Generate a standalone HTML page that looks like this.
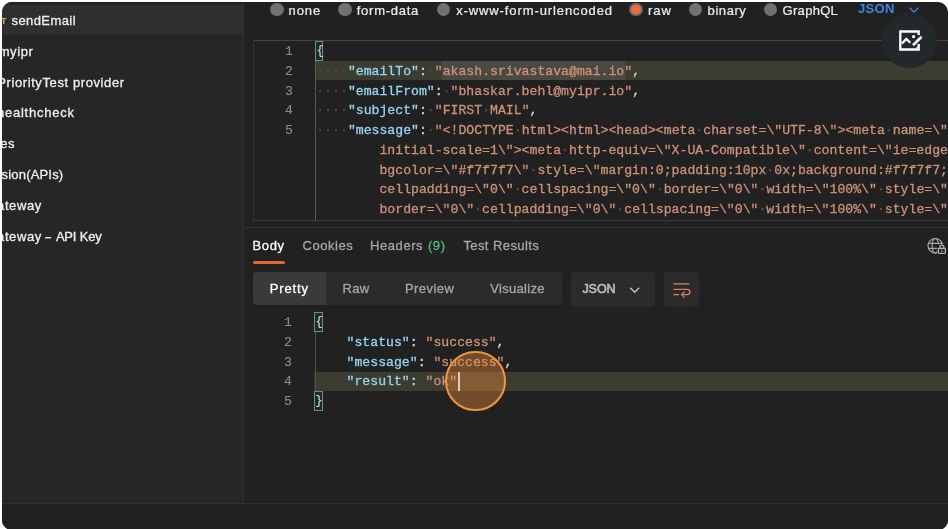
<!DOCTYPE html>
<html lang="en">
<head>
<meta charset="utf-8">
<title>Postman - sendEmail</title>
<style>
html,body{margin:0;padding:0;background:#fff;}
body{width:948px;height:529px;overflow:hidden;position:relative;font-family:"Liberation Sans",sans-serif;}
#app{position:absolute;left:2px;top:2px;width:946px;height:528px;background:#212121;border-radius:10px;overflow:hidden;}
/* all children of #app are positioned in page coordinates via this wrapper */
#pg{position:absolute;left:-2px;top:-2px;width:948px;height:529px;will-change:transform;}
.abs{position:absolute;}
/* sidebar */
#side{left:0;top:0;width:243px;height:503px;background:#262626;}
#sideborder{left:243px;top:0;width:1px;height:503px;background:#303030;}
#selrow{left:0;top:4.6px;width:243px;height:30.8px;background:#2f2f2f;}
.sitem{position:absolute;white-space:pre;color:#f0f0f0;-webkit-text-stroke:0.3px;font-size:13px;line-height:20px;}
#status{left:0;top:503px;width:948px;height:26px;background:#212121;border-top:1px solid #303030;}
/* radios */
.radio{position:absolute;width:13.4px;height:13.4px;border-radius:50%;background:#717171;}
.rlabel{position:absolute;white-space:pre;-webkit-text-stroke:0.24px;color:#ececec;font-size:13px;line-height:20px;}
/* editor */
.mono{font-family:"Liberation Mono",monospace;-webkit-text-stroke:0.3px;font-size:13.17px;line-height:19.7px;white-space:pre;}
.ln{position:absolute;color:#8c8c86;text-align:right;width:30px;-webkit-text-stroke:0.1px;}
.cl{position:absolute;height:19.7px;}
.k{color:#96d4f4;}
.s{color:#ce9178;}
.p{color:#d4d4d4;}
.w{color:#4a4a4a;}
.ws{color:#6a5044;}
/* tabs */
.tab{position:absolute;white-space:pre;-webkit-text-stroke:0.3px;font-size:13px;line-height:20px;color:#a6a6a6;}
.seg{position:absolute;white-space:pre;-webkit-text-stroke:0.3px;font-size:13px;line-height:20px;color:#a6a6a6;}
</style>
</head>
<body>
<div id="app"><div id="pg">

<!-- SIDEBAR -->
<div id="side" class="abs"></div>
<div id="selrow" class="abs"></div>
<div class="abs" style="left:0;top:2px;width:243px;height:1px;background:#1d1d1d;"></div>
<div id="sideborder" class="abs"></div>
<div class="sitem" style="left:-5.6px;top:11.0px;color:#ddb03c;font-size:9.5px;font-weight:bold;-webkit-text-stroke:0;">ST</div>
<div class="sitem" style="left:11.50px;top:11.00px;letter-spacing:0.419px;">sendEmail</div>
<div class="sitem" style="left:-1.35px;top:41.80px;letter-spacing:0.600px;">myipr</div>
<div class="sitem" style="left:-2.75px;top:72.60px;letter-spacing:0.596px;">PriorityTest provider</div>
<div class="sitem" style="left:-3.05px;top:103.40px;letter-spacing:0.767px;">healthcheck</div>
<div class="sitem" style="left:0.20px;top:134.20px;letter-spacing:0.600px;">es</div>
<div class="sitem" style="left:1.60px;top:165.00px;letter-spacing:0.180px;">sion(APIs)</div>
<div class="sitem" style="left:-2.95px;top:195.80px;letter-spacing:0.600px;">ateway</div>
<div class="sitem" style="left:-2.95px;top:226.6px;width:120px;height:20px;"><span style="position:absolute;left:0;top:0;letter-spacing:0.6px;">ateway </span><span style="position:absolute;left:49.3px;top:0;display:inline-block;transform:scaleX(1.7);transform-origin:2.1px 50%;">-</span><span style="position:absolute;left:56.1px;top:0;letter-spacing:-0.175px;"> API Key</span></div>

<!-- BODY TYPE RADIOS -->
<div class="radio" style="left:270.3px;top:2.8px;"></div>
<div class="rlabel" style="left:288.55px;top:0.50px;letter-spacing:0.883px;">none</div>
<div class="radio" style="left:338.2px;top:2.8px;"></div>
<div class="rlabel" style="left:356.75px;top:0.50px;letter-spacing:0.744px;">form-data</div>
<div class="radio" style="left:436.6px;top:2.8px;"></div>
<div class="rlabel" style="left:456.15px;top:0.50px;letter-spacing:0.897px;">x-www-form-urlencoded</div>
<div class="radio" style="left:629.4px;top:2.8px;background:#f26b3a;box-sizing:border-box;border:2.3px solid #6e6e66;"></div>
<div class="rlabel" style="left:648.00px;top:0.50px;letter-spacing:0.950px;">raw</div>
<div class="radio" style="left:688.5px;top:2.8px;"></div>
<div class="rlabel" style="left:707.60px;top:0.50px;letter-spacing:0.570px;">binary</div>
<div class="radio" style="left:763.7px;top:2.8px;"></div>
<div class="rlabel" style="left:782.60px;top:0.50px;letter-spacing:0.292px;">GraphQL</div>
<div class="rlabel" style="left:858px;top:-1.4px;color:#3d84e0;font-weight:bold;-webkit-text-stroke:0;letter-spacing:0.3px;">JSON</div>
<svg class="abs" style="left:907px;top:5px;" width="14" height="10" viewBox="0 0 14 10"><path d="M2.5 2.8 L7 7 L11.5 2.8" fill="none" stroke="#3f83e0" stroke-width="1.3"/></svg>

<!-- REQUEST EDITOR -->
<div class="abs" id="reqed" style="left:253px;top:40px;width:720px;height:181px;border:1px solid #3a3a3a;border-top-color:#454545;border-left-color:#323232;box-sizing:border-box;"></div>
<div class="abs" style="left:315px;top:41px;width:1px;height:179px;background:#5a5a5a;"></div>
<div class="abs" style="left:316px;top:61px;width:640px;height:19.3px;background:#3c3c31;"></div>
<div class="abs" style="left:442px;top:61px;width:183px;height:19.3px;background:#4a4a42;"></div>
<div class="abs" style="left:315.2px;top:41px;width:7.9px;height:19.9px;box-sizing:border-box;border:1px solid #85857c;background:#11302b;"></div>

<div class="mono ln" style="left:263px;top:42.3px;">1</div>
<div class="mono ln" style="left:263px;top:62.0px;">2</div>
<div class="mono ln" style="left:263px;top:81.7px;">3</div>
<div class="mono ln" style="left:263px;top:101.4px;">4</div>
<div class="mono ln" style="left:263px;top:121.1px;">5</div>

<div class="mono cl" style="left:316.6px;top:42.3px;font-size:12.2px;-webkit-text-stroke:0.15px;"><span class="p">{</span></div>
<div class="mono cl" style="left:316.3px;top:62.0px;"><span class="w">····</span><span class="k">"emailTo"</span><span class="p">:</span><span class="w">·</span><span class="s">"akash.srivastava@mai.io"</span><span class="p">,</span></div>
<div class="mono cl" style="left:316.3px;top:81.7px;"><span class="w">····</span><span class="k">"emailFrom"</span><span class="p">:</span><span class="w">·</span><span class="s">"bhaskar.behl@myipr.io"</span><span class="p">,</span></div>
<div class="mono cl" style="left:316.3px;top:101.4px;"><span class="w">····</span><span class="k">"subject"</span><span class="p">:</span><span class="w">·</span><span class="s">"FIRST<span class="ws">·</span>MAIL"</span><span class="p">,</span></div>
<div class="mono cl" style="left:316.3px;top:121.1px;"><span class="w">····</span><span class="k">"message"</span><span class="p">:</span><span class="w">·</span><span class="s">"&lt;!DOCTYPE<span class="ws">·</span>html&gt;&lt;html&gt;&lt;head&gt;&lt;meta<span class="ws">·</span>charset=\"UTF-8\"&gt;&lt;meta<span class="ws">·</span>name=\"viewport\"</span></div>
<div class="mono cl" style="left:316.3px;top:140.8px;"><span class="s">        initial-scale=1\"&gt;&lt;meta<span class="ws">·</span>http-equiv=\"X-UA-Compatible\"<span class="ws">·</span>content=\"ie=edge\"&gt;</span></div>
<div class="mono cl" style="left:316.3px;top:160.5px;"><span class="s">        bgcolor=\"#f7f7f7\"<span class="ws">·</span>style=\"margin:0;padding:10px<span class="ws">·</span>0x;background:#f7f7f7;\"&gt;</span></div>
<div class="mono cl" style="left:316.3px;top:180.2px;"><span class="s">        cellpadding=\"0\"<span class="ws">·</span>cellspacing=\"0\"<span class="ws">·</span>border=\"0\"<span class="ws">·</span>width=\"100%\"<span class="ws">·</span>style=\"max</span></div>
<div class="mono cl" style="left:316.3px;top:199.9px;"><span class="s">        border=\"0\"<span class="ws">·</span>cellpadding=\"0\"<span class="ws">·</span>cellspacing=\"0\"<span class="ws">·</span>width=\"100%\"<span class="ws">·</span>style=\"max</span></div>

<!-- separator -->
<div class="abs" style="left:244px;top:227px;width:704px;height:1px;background:#2e2e2e;"></div>

<!-- RESPONSE TABS -->
<div class="tab" style="left:252.55px;top:235.90px;color:#ffffff;letter-spacing:0.633px;">Body</div>
<div class="abs" style="left:253px;top:260.5px;width:32px;height:3px;border-radius:1.5px;background:#e8622f;"></div>
<div class="tab" style="left:302.55px;top:235.90px;letter-spacing:0.525px;">Cookies</div>
<div class="tab" style="left:370.05px;top:235.90px;letter-spacing:0.567px;">Headers</div>
<div class="tab" style="left:427.90px;top:235.90px;color:#4fbf77;letter-spacing:0.625px;">(9)</div>
<div class="tab" style="left:463.40px;top:235.90px;letter-spacing:0.418px;">Test Results</div>

<!-- segmented -->
<div class="abs" style="left:253px;top:272px;width:309px;height:33px;border-radius:4px;background:#2b2b2b;"></div>
<div class="abs" style="left:253px;top:272px;width:73px;height:33px;border-radius:4px 0 0 4px;background:#3a3a3a;"></div>
<div class="seg" style="left:269.75px;top:279.30px;color:#ffffff;letter-spacing:0.850px;">Pretty</div>
<div class="seg" style="left:342.50px;top:279.30px;letter-spacing:0.350px;">Raw</div>
<div class="seg" style="left:404.95px;top:279.30px;letter-spacing:0.458px;">Preview</div>
<div class="seg" style="left:490.20px;top:279.30px;letter-spacing:0.325px;">Visualize</div>

<div class="abs" style="left:571px;top:272px;width:84px;height:35px;border-radius:4px;background:#2b2b2b;"></div>
<div class="seg" style="left:582.4px;top:278.7px;color:#c0c0c0;-webkit-text-stroke:0.55px;font-size:12.5px;letter-spacing:-0.05px;">JSON</div>
<svg class="abs" style="left:627px;top:284px;" width="16" height="12" viewBox="0 0 16 12"><path d="M3.2 3.8 L7.7 8.2 L12.2 3.8" fill="none" stroke="#bdbdbd" stroke-width="1.5"/></svg>

<div class="abs" style="left:664px;top:272px;width:35px;height:35px;border-radius:4px;background:#2b2b2b;"></div>
<svg class="abs" style="left:664px;top:272px;" width="35" height="35" viewBox="0 0 35 35"><g fill="none" stroke="#cf8462" stroke-width="1.3"><path d="M9.4 11.9 H25.3"/><path d="M9.4 17.3 H23.2 a2.65 2.65 0 0 1 0 5.3 H18"/><path d="M9.4 22.6 H15.1"/><path d="M20.6 19.6 L17.6 22.6 L20.6 25.6"/></g></svg>

<!-- globe -->
<svg class="abs" style="left:926px;top:236px;" width="22" height="20" viewBox="0 0 22 20"><g fill="none" stroke="#a8a8a8" stroke-width="1.15"><circle cx="9.3" cy="9.8" r="7.3"/><ellipse cx="9.3" cy="9.8" rx="3.3" ry="7.3"/><path d="M2.4 7.3 H16.2 M2.4 12.3 H16.2"/></g><rect x="11.2" y="8.3" width="9.4" height="10.2" rx="1" fill="#212121"/><g fill="none" stroke="#b4b4b4" stroke-width="1.3"><rect x="12.4" y="12.4" width="7" height="4.9" rx="0.8"/><path d="M13.9 12.4 V11.2 a2 2 0 0 1 4 0 V12.4"/><path d="M15.9 13.6 V16" stroke-width="1"/></g></svg>

<!-- RESPONSE EDITOR -->
<div class="abs" style="left:314px;top:372px;width:640px;height:19px;background:#3c3c31;"></div>
<div class="abs" style="left:314.5px;top:332px;width:1px;height:59px;background:#505050;"></div>
<div class="abs" style="left:314.1px;top:312px;width:8.9px;height:20px;box-sizing:border-box;border:1px solid #85857c;background:#11302b;"></div>
<div class="abs" style="left:314.1px;top:391px;width:8.9px;height:20px;box-sizing:border-box;border:1px solid #85857c;background:#11302b;"></div>

<div class="mono ln" style="left:262px;top:313.0px;">1</div>
<div class="mono ln" style="left:262px;top:332.8px;">2</div>
<div class="mono ln" style="left:262px;top:352.6px;">3</div>
<div class="mono ln" style="left:262px;top:372.4px;">4</div>
<div class="mono ln" style="left:262px;top:392.2px;">5</div>

<div class="mono cl" style="left:315.6px;top:313.0px;font-size:12.2px;-webkit-text-stroke:0.15px;"><span class="p">{</span></div>
<div class="mono cl" style="left:315px;top:332.8px;"><span class="k">    "status"</span><span class="p">: </span><span class="s">"success"</span><span class="p">,</span></div>
<div class="mono cl" style="left:315px;top:352.6px;"><span class="k">    "message"</span><span class="p">: </span><span class="s">"success"</span><span class="p">,</span></div>
<div class="mono cl" style="left:315px;top:372.4px;"><span class="k">    "result"</span><span class="p">: </span><span class="s">"ok"</span></div>
<div class="mono cl" style="left:315.2px;top:392.2px;font-size:12.2px;-webkit-text-stroke:0.15px;"><span class="p">}</span></div>
<div class="abs" style="left:458px;top:372px;width:2px;height:19px;background:#f0f0f0;"></div>

<!-- click indicator -->
<div class="abs" style="left:445.3px;top:350.7px;width:60.8px;height:60.8px;box-sizing:border-box;border-radius:50%;border:2.4px solid #f2963c;background:rgba(235,140,60,0.40);"></div>

<!-- status bar -->
<div id="status" class="abs"></div>

<!-- top-right capture button -->
<div class="abs" style="left:882px;top:13px;width:55px;height:55px;border-radius:50%;background:#23282b;"></div>
<svg class="abs" style="left:895px;top:26px;" width="30" height="30" viewBox="0 0 30 30"><g fill="none" stroke="#ffffff" stroke-width="2.3" stroke-linejoin="miter"><path d="M23.7 9 V5.5 H5.3 V23.5 H23.7 V18"/><path d="M7 17.5 L11.3 12.9 L15.3 16.8" stroke-width="2.2"/><path d="M26.6 10.8 L18 19.2" stroke-width="2.6"/></g><circle cx="18.6" cy="10.7" r="1.6" fill="#ffffff"/><path d="M20.5 22.3 L22.6 20.2 L22.6 22.3 Z" fill="#ffffff"/></svg>

</div></div>
</body>
</html>
